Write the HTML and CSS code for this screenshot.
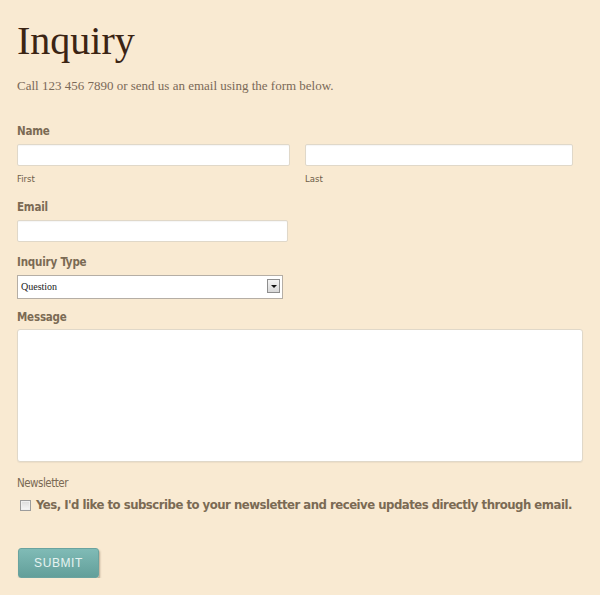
FILE: index.html
```html
<!DOCTYPE html>
<html>
<head>
<meta charset="utf-8">
<link rel="stylesheet" href="styles.css">
</head>
<body>
<div class="page">
  <h1 class="title">Inquiry</h1>
  <p class="intro">Call 123 456 7890 or send us an email using the form below.</p>
  <form class="form">
    <div class="field">
      <div class="label">Name</div>
      <div class="name-row">
        <div class="name-col first">
          <input class="text-input" type="text">
          <div class="sublabel">First</div>
        </div>
        <div class="name-col last">
          <input class="text-input" type="text">
          <div class="sublabel">Last</div>
        </div>
      </div>
    </div>
    <div class="field field-email">
      <div class="label">Email</div>
      <input class="text-input email" type="text">
    </div>
    <div class="field field-type">
      <div class="label">Inquiry Type</div>
      <div class="select-box">
        <span class="select-value">Question</span>
        <span class="select-arrow"><span class="tri"></span></span>
      </div>
    </div>
    <div class="field field-message">
      <div class="label">Message</div>
      <textarea class="textarea"></textarea>
    </div>
    <div class="field field-news">
      <div class="label light">Newsletter</div>
      <label class="check-row"><span class="checkbox"></span><span class="check-text">Yes, I'd like to subscribe to your newsletter and receive updates directly through email.</span></label>
    </div>
    <button type="button" class="submit">SUBMIT</button>
  </form>
</div>
</body>
</html>
```

FILE: styles.css
```css
html, body {
  margin: 0;
  padding: 0;
  background: #f9ead2;
}
.page {
  padding: 14px 17px 0 17px;
}
.title {
  margin: 0;
  font-family: "Liberation Serif", serif;
  font-weight: normal;
  font-size: 40px;
  line-height: 54px;
  color: #3b2414;
}
.intro {
  margin: 10px 0 0 0;
  font-family: "Liberation Serif", serif;
  font-size: 13px;
  line-height: 16px;
  color: #7a6958;
}
.form {
  margin-top: 29px;
}
.label {
  font-family: "DejaVu Sans Condensed", sans-serif;
  font-weight: bold;
  font-size: 11.5px;
  line-height: 16px;
  letter-spacing: -0.2px;
  color: #7b6a54;
}
.label.light {
  font-weight: normal;
  font-size: 11.5px;
  letter-spacing: -0.5px;
}
.name-row {
  display: flex;
  gap: 15px;
  margin-top: 5px;
}
.name-col.first { width: 273px; }
.name-col.last { width: 268px; }
.text-input {
  display: block;
  box-sizing: border-box;
  width: 100%;
  height: 22px;
  margin: 0;
  background: #fff;
  border: 1px solid #e0d8c9;
  border-radius: 2px;
  box-shadow: inset 0 1px 1px rgba(0,0,0,0.04);
}
.sublabel {
  margin-top: 7px;
  font-family: "DejaVu Sans Condensed", sans-serif;
  font-size: 9.5px;
  line-height: 12px;
  color: #6d5c48;
}
.field-email { margin-top: 14px; }
.field-email .text-input.email {
  width: 271px;
  margin-top: 5px;
}
.field-type { margin-top: 12px; }
.select-box {
  position: relative;
  box-sizing: border-box;
  width: 266px;
  height: 24px;
  margin-top: 5px;
  background: #fff;
  border: 1px solid #b5aea5;
}
.select-value {
  display: block;
  padding-left: 3px;
  font-family: "Liberation Serif", serif;
  font-size: 10px;
  line-height: 22px;
  color: #222;
}
.select-arrow {
  position: absolute;
  right: 2px;
  top: 3px;
  width: 13px;
  height: 14px;
  box-sizing: border-box;
  border: 1px solid #8e8e8e;
  background: linear-gradient(#f4f4f4, #d8d8d8);
}
.select-arrow .tri {
  position: absolute;
  left: 3px;
  top: 5px;
  width: 0;
  height: 0;
  border-left: 3px solid transparent;
  border-right: 3px solid transparent;
  border-top: 3px solid #111;
}
.field-message { margin-top: 10px; }
.textarea {
  display: block;
  box-sizing: border-box;
  width: 566px;
  height: 133px;
  margin-top: 4px;
  background: #fff;
  border: 1px solid #e0d8c9;
  border-radius: 3px;
  resize: none;
  box-shadow: 0 1px 1px rgba(0,0,0,0.05);
}
.field-news { margin-top: 13px; }
.check-row {
  display: flex;
  align-items: center;
  gap: 5px;
  margin-top: 5px;
  padding-left: 3px;
  white-space: nowrap;
}
.checkbox {
  display: block;
  flex: 0 0 auto;
  width: 11px;
  height: 11px;
  box-sizing: border-box;
  border: 1px solid #9c9c9c;
  background: linear-gradient(#dcdcdc, #f8f8f8);
  box-shadow: inset 0 0 0 1px #f0f0f0;
}
.check-text {
  font-family: "DejaVu Sans Condensed", sans-serif;
  font-weight: bold;
  font-size: 13px;
  line-height: 18px;
  letter-spacing: -0.5px;
  color: #7b6a54;
}
.submit {
  display: block;
  margin: 34px 0 0 1px;
  width: 81px;
  height: 30px;
  padding: 0;
  border: 1px solid #6aa39f;
  border-radius: 3px;
  background: linear-gradient(#80bbb6, #629f9a);
  box-shadow: 1px 2px 2px rgba(60,40,20,0.35);
  font-family: "Liberation Sans", Arial, sans-serif;
  font-size: 12px;
  letter-spacing: 0.6px;
  color: #e6f3f1;
}
```
